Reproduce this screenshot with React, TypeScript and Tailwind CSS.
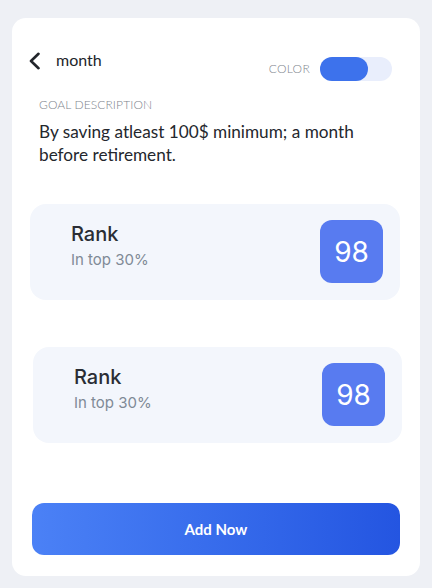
function RankCard({ shift }: { shift: string }) {
  return (
    <div className={`${shift} h-[96px] rounded-[16px] bg-[#f3f6fc] flex items-start justify-between pl-[41px] pr-[17px] pt-[16px]`}>
      <div className="pt-[2px] font-['Inter',sans-serif]">
        <div className="text-[20px] leading-[24px] font-medium text-[#2a2d34]">Rank</div>
        <div className="mt-[4px] text-[15px] leading-[20px] text-[#7f8a96]">In top 30%</div>
      </div>
      <div className="w-[63px] h-[63px] rounded-[12px] bg-[#587bf0] flex items-center justify-center text-white text-[28px] font-['Inter',sans-serif]">
        98
      </div>
    </div>
  );
}

export default function App() {
  return (
    <div className="w-[432px] h-[588px] bg-[#eef0f5] pt-[18px] px-[12px] font-['Lato',sans-serif]">
      <div className="h-[558px] bg-white rounded-[14px] flex flex-col">
        <div className="flex items-start pl-[16px] pr-[28px] pt-[33px]">
          <svg width="13" height="18" viewBox="0 0 13 18" className="mt-[1px]" fill="none">
            <path d="M10.5 1.8 L3 9 L10.5 16.2" stroke="#22252b" strokeWidth="2.6" strokeLinecap="round" strokeLinejoin="round" />
          </svg>
          <span className="ml-[15px] -mt-[2px] text-[16px] leading-[22px] text-[#22252b]">month</span>
          <div className="ml-auto mt-[6px] flex items-center">
            <span className="text-[12px] font-light tracking-[0.3px] text-[#80858e]">COLOR</span>
            <div className="ml-[10px] w-[72px] h-[24px] rounded-full bg-[#e9eefc]">
              <div className="w-[48px] h-[24px] rounded-full bg-[#3d72ec]" />
            </div>
          </div>
        </div>
        <div className="pl-[27px] pr-[20px] mt-[17px]">
          <div className="text-[12px] leading-[14px] font-light tracking-[0.1px] text-[#80858e]">GOAL DESCRIPTION</div>
          <p className="mt-[8px] max-w-[335px] text-[17.2px] leading-[23px] text-[#24272d]">
            By saving atleast 100$ minimum; a month before retirement.
          </p>
        </div>
        <div className="mt-[38px] pr-[20px]">
          <RankCard shift="ml-[18px]" />
        </div>
        <div className="mt-[47px] pr-[18px]">
          <RankCard shift="ml-[21px]" />
        </div>
        <div className="mt-auto mb-[21px] px-[20px]">
          <button className="w-full h-[52px] rounded-[12px] bg-gradient-to-r from-[#4b81f6] to-[#2455e1] text-white text-[15px] font-bold">
            Add Now
          </button>
        </div>
      </div>
    </div>
  );
}
